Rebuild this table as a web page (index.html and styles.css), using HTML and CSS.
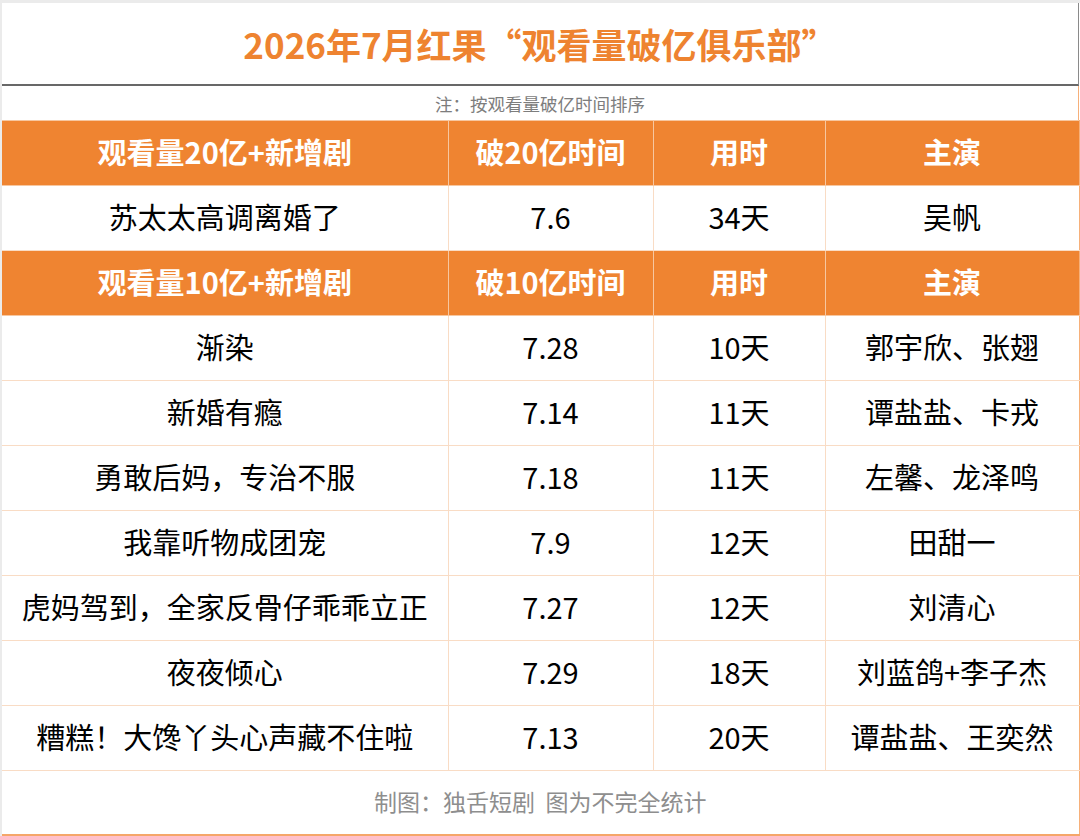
FILE: index.html
```html
<!DOCTYPE html>
<html lang="zh-CN">
<head>
<meta charset="utf-8">
<title>2026年7月红果“观看量破亿俱乐部”</title>
<link rel="stylesheet" href="styles.css">
</head>
<body>
<div class="sheet">
  <div class="title">2026年7月红果“观看量破亿俱乐部”</div>
  <div class="note">注：按观看量破亿时间排序</div>
  <table class="grid">
    <colgroup>
      <col class="c1"><col class="c2"><col class="c3"><col class="c4">
    </colgroup>
    <tbody>
      <tr class="hdr"><td>观看量20亿+新增剧</td><td>破20亿时间</td><td>用时</td><td>主演</td></tr>
      <tr><td>苏太太高调离婚了</td><td>7.6</td><td>34天</td><td>吴帆</td></tr>
      <tr class="hdr"><td>观看量10亿+新增剧</td><td>破10亿时间</td><td>用时</td><td>主演</td></tr>
      <tr><td>渐染</td><td>7.28</td><td>10天</td><td>郭宇欣、张翅</td></tr>
      <tr><td>新婚有瘾</td><td>7.14</td><td>11天</td><td>谭盐盐、卡戎</td></tr>
      <tr><td>勇敢后妈，专治不服</td><td>7.18</td><td>11天</td><td>左馨、龙泽鸣</td></tr>
      <tr><td>我靠听物成团宠</td><td>7.9</td><td>12天</td><td>田甜一</td></tr>
      <tr><td>虎妈驾到，全家反骨仔乖乖立正</td><td>7.27</td><td>12天</td><td>刘清心</td></tr>
      <tr><td>夜夜倾心</td><td>7.29</td><td>18天</td><td>刘蓝鸽+李子杰</td></tr>
      <tr><td>糟糕！大馋丫头心声藏不住啦</td><td>7.13</td><td>20天</td><td>谭盐盐、王奕然</td></tr>
      <tr class="foot"><td colspan="4">制图：独舌短剧&nbsp;&nbsp;图为不完全统计</td></tr>
    </tbody>
  </table>
</div>
</body>
</html>
```

FILE: styles.css
```css
html, body {
  margin: 0;
  padding: 0;
  background: #ffffff;
}

body {
  border-top: 3px solid #ebebeb;
  border-left: 2px solid #ebebeb;
  font-family: "Noto Sans CJK SC", "Noto Sans", sans-serif;
  color: #000;
}

.sheet {
  width: 1077px;
}

.title {
  height: 81px;
  border-bottom: 2px solid #686868;
  border-right: 1px solid #8a8a8a;
  display: flex;
  align-items: center;
  justify-content: center;
  font-size: 35px;
  font-weight: 700;
  color: #ee8330;
}

.note {
  height: 34px;
  border-right: 1px solid #f6b07a;
  display: flex;
  align-items: center;
  justify-content: center;
  font-size: 17.5px;
  color: #7d7d7d;
}

.grid {
  width: 1077px;
  border-collapse: collapse;
  table-layout: fixed;
}

.c1 { width: 446px; }
.c2 { width: 205px; }
.c3 { width: 172px; }
.c4 { width: 254px; }

.grid td {
  height: 61px;
  padding: 0 0 3px 0;
  border: 1px solid #f9dcc5;
  text-align: center;
  vertical-align: middle;
  font-size: 29px;
  line-height: 1;
  white-space: nowrap;
}

.grid td:first-child {
  border-left: none;
}

.grid td:last-child {
  border-right: 1px solid #f6b07a;
}

.grid .hdr td {
  background: #ef8431;
  color: #ffffff;
  font-weight: 700;
  border-color: #f7c7a0;
}

.grid .hdr td:last-child {
  border-right-color: #f6b07a;
}

.grid .foot td {
  height: 60px;
  font-size: 23px;
  color: #8e8e8e;
  border-bottom: 2px solid #f5a669;
  border-right: 1px solid #f6b07a;
}
```
